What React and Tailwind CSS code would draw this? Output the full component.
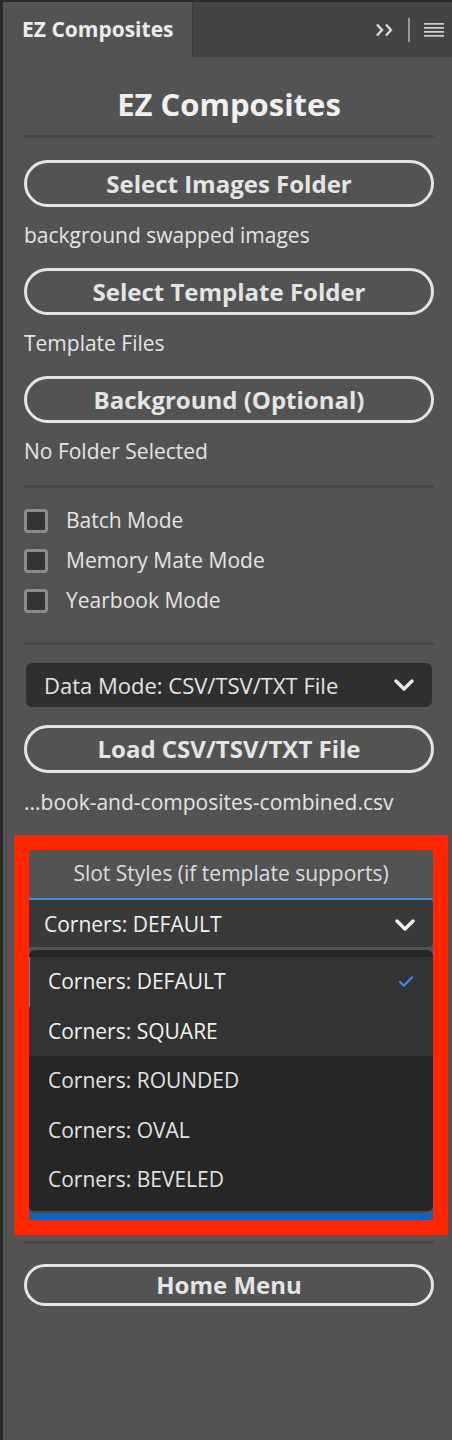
import { Check } from "lucide-react";

const font = { fontFamily: '"Open Sans", "Noto Sans", sans-serif' };

function PillButton({ children, h = "h-[47px]" }) {
  return (
    <button
      className={
        "flex w-full items-center justify-center rounded-full border-[3px] border-[#e4e4e4] text-[24px] leading-none font-bold text-[#e4e4e4] " +
        h
      }
    >
      {children}
    </button>
  );
}

function Divider() {
  return <div className="h-[3px] w-full rounded-full bg-[#474747]" />;
}

function Caption({ children, pt = "pt-[14px]", pb = "pb-[19px]" }) {
  return <p className={"text-[21px] leading-[28px] text-[#e4e4e4] " + pt + " " + pb}>{children}</p>;
}

function Chevron({ color = "#e8e8e8" }) {
  return (
    <svg width="20" height="12" viewBox="0 0 20 12" fill="none" stroke={color} strokeWidth="3.4" strokeLinecap="round" strokeLinejoin="round">
      <path d="M2 2 L10 10 L18 2" />
    </svg>
  );
}

function Checkbox({ label }) {
  return (
    <label className="flex h-[40px] items-center gap-[18px]">
      <span className="h-[24px] w-[24px] shrink-0 rounded-[4px] border-[3px] border-[#8c8c8c] bg-[#343434]" />
      <span className="text-[21px] text-[#e4e4e4]">{label}</span>
    </label>
  );
}

const corners = ["DEFAULT", "SQUARE", "ROUNDED", "OVAL", "BEVELED"];

export default function App() {
  return (
    <div className="flex h-[1440px] w-[452px] bg-[#2c2c2c]" style={font}>
      <div className="w-[3px] shrink-0 bg-[#2a2a2a]" />
      <div className="flex min-w-0 flex-1 flex-col pt-[2px]">
        {/* tab bar */}
        <div className="flex h-[55px] shrink-0 bg-[#444444]">
          <div className="flex w-[189px] items-center bg-[#535353] pl-[19px] text-[21px] font-bold text-[#ececec]">
            EZ Composites
          </div>
          <div className="w-px bg-[#3a3a3a]" />
          <div className="flex flex-1 items-center justify-end gap-[14px] pr-[8px]">
            <svg width="18" height="14" viewBox="0 0 18 14" fill="none" stroke="#d8d8d8" strokeWidth="2.4">
              <path d="M1 1.5 L6 7 L1 12.5" />
              <path d="M10 1.5 L15 7 L10 12.5" />
            </svg>
            <div className="h-[24px] w-[2px] bg-[#9a9a9a]" />
            <svg width="20" height="14" viewBox="0 0 20 14" fill="#cfcfcf">
              <rect x="0" y="0" width="20" height="1.7" />
              <rect x="0" y="4" width="20" height="1.7" />
              <rect x="0" y="8" width="20" height="1.7" />
              <rect x="0" y="12" width="20" height="1.7" />
            </svg>
          </div>
        </div>

        {/* panel */}
        <div className="flex flex-1 flex-col bg-[#535353] pl-[21px] pr-[18px]">
          <h1 className="mt-[27px] text-center text-[31px] font-bold leading-[40px] text-[#f0f0f0]">EZ Composites</h1>
          <div className="mt-[11px]"><Divider /></div>

          <div className="mt-[22px]"><PillButton>Select Images Folder</PillButton></div>
          <Caption>background swapped images</Caption>
          <PillButton>Select Template Folder</PillButton>
          <Caption>Template Files</Caption>
          <PillButton>Background (Optional)</PillButton>
          <Caption pb="pb-0">No Folder Selected</Caption>
          <div className="mt-[20px]"><Divider /></div>

          <div className="mt-[13px] flex flex-col">
            <Checkbox label="Batch Mode" />
            <Checkbox label="Memory Mate Mode" />
            <Checkbox label="Yearbook Mode" />
          </div>
          <div className="mt-[21px]"><Divider /></div>

          <div className="mx-[2px] mt-[18px] flex h-[44px] items-center justify-between rounded-[6px] bg-[#2f2f2f] pl-[18px] pr-[18px] text-[22px] text-[#e4e4e4]">
            <span>Data Mode: CSV/TSV/TXT File</span>
            <Chevron />
          </div>
          <div className="mt-[18px]"><PillButton h="h-[48px]">Load CSV/TSV/TXT File</PillButton></div>
          <Caption pt="pt-[15px]" pb="pb-0">...book-and-composites-combined.csv</Caption>

          {/* highlighted slot styles block */}
          <div className="-ml-[10px] -mr-[14px] mt-[19px] border-[15px] border-[#ff2600]">
            <div className="flex h-[48px] items-center justify-center bg-[#535353] text-[21px] text-[#dcdcdc]">
              Slot Styles (if template supports)
            </div>
            <div className="flex h-[49px] items-center justify-between rounded-tr-[3px] rounded-br-[4px] border-t-2 border-[#3d8bea] bg-[#393939] pl-[15px] pr-[18px] pt-[2px] text-[21px] text-[#f0f0f0]">
              <span>Corners: DEFAULT</span>
              <Chevron color="#f0f0f0" />
            </div>
            <div className="bg-[#535353] pt-[3px]">
              <div className="overflow-hidden rounded-b-[8px] bg-[#1361c0] pb-[7px]">
                <div className="overflow-hidden rounded-[6px] border-b-2 border-[#4a4a4a] bg-[#262626] pt-[7px]">
                  {corners.map((c, i) => (
                    <div
                      key={c}
                      className={
                        "flex h-[49.5px] items-center justify-between pr-[18px] text-[21px] " +
                        (i < 2 ? "bg-[#333333] text-[#f2f2f2]" : "text-[#e2e2e2]") +
                        (i === 0 ? " border-l border-[#3d8bea] pl-[18px]" : " pl-[19px]")
                      }
                    >
                      <span>Corners: {c}</span>
                      {i === 0 && <Check size={18} strokeWidth={3} color="#3d8bea" />}
                    </div>
                  ))}
                  <div className="h-[6px]" />
                </div>
              </div>
            </div>
          </div>

          <div className="mt-[6px]"><Divider /></div>
          <div className="mt-[20px]"><PillButton h="h-[42px]">Home Menu</PillButton></div>
        </div>
      </div>
    </div>
  );
}
